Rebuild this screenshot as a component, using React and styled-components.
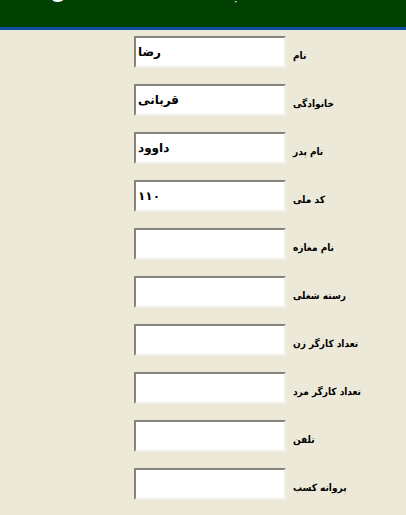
import React from "react";
import styled, { createGlobalStyle } from "styled-components";

const GlobalStyle = createGlobalStyle`
  html, body {
    margin: 0;
    padding: 0;
    background: #ece9d8;
    font-family: "DejaVu Sans", "Noto Sans", sans-serif;
  }
`;

const fields = [
  { label: "نام", value: "رضا" },
  { label: "خانوادگی", value: "قربانی" },
  { label: "نام پدر", value: "داوود" },
  { label: "کد ملی", value: "۱۱۰" },
  { label: "نام مغازه", value: "" },
  { label: "رسته شغلی", value: "" },
  { label: "تعداد کارگر زن", value: "" },
  { label: "تعداد کارگر مرد", value: "" },
  { label: "تلفن", value: "" },
  { label: "پروانه کسب", value: "" },
];

const App = () => {
  return (
    <Page>
      <GlobalStyle />
      <Header>
        <Title>ثبت مشخصات مشاغل</Title>
      </Header>
      <Form>
        {fields.map((f) => (
          <Row key={f.label}>
            <Input defaultValue={f.value} />
            <Label>{f.label}</Label>
          </Row>
        ))}
      </Form>
    </Page>
  );
};

export default App;

const Page = styled.div`
  width: 406px;
  min-height: 515px;
  background: #ece9d8;
`;

const Header = styled.div`
  height: 27px;
  background: #004000;
  border-bottom: 3px solid #0d4f9e;
  overflow: hidden;
  display: flex;
  padding-left: 64px;
`;

const Title = styled.div`
  margin-top: -19px;
  line-height: 24px;
  color: #ffffff;
  font-size: 18px;
  font-weight: bold;
  direction: rtl;
  width: 182px;
  white-space: nowrap;
`;

const Form = styled.div`
  display: flex;
  flex-direction: column;
  gap: 16px;
  padding: 6px 0 0 134px;
`;

const Row = styled.div`
  display: flex;
  align-items: center;
  gap: 7px;
`;

const Input = styled.input`
  box-sizing: border-box;
  width: 152px;
  height: 32px;
  margin: 0;
  padding: 0 2px;
  background: #ffffff;
  border-style: solid;
  border-width: 2px;
  border-color: #86837a #f1efe6 #f1efe6 #86837a;
  font-family: "DejaVu Sans", sans-serif;
  font-weight: bold;
  font-size: 12px;
  color: #000000;
  text-align: left;
  outline: none;
`;

const Label = styled.span`
  padding-top: 6px;
  font-family: "DejaVu Sans Condensed", "DejaVu Sans", sans-serif;
  font-size: 10px;
  font-weight: bold;
  color: #000000;
  direction: rtl;
  white-space: nowrap;
`;
